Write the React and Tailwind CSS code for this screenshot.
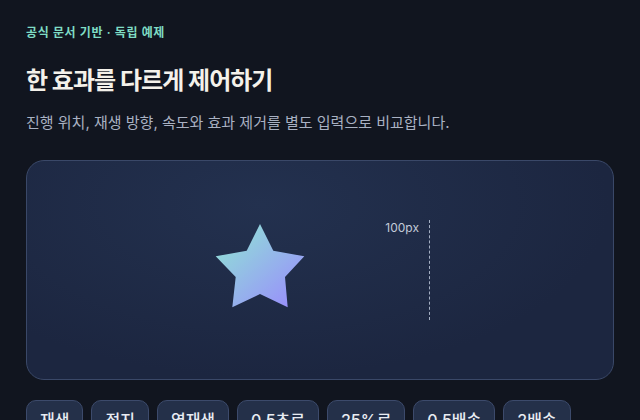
import React from "react";

const buttons = ["재생", "정지", "역재생", "0.5초로", "25%로", "0.5배속", "2배속"];

const Star = () => (
  <svg width="92" height="92" viewBox="0 0 92 92">
    <defs>
      <linearGradient id="starFill" x1="0" y1="0" x2="1" y2="1">
        <stop offset="0%" stopColor="#8fe9d2" />
        <stop offset="100%" stopColor="#9a88ff" />
      </linearGradient>
    </defs>
    <polygon
      points="46,0 59.3,26.7 90.3,32.3 71,53 73.7,83.3 46,70 18.3,83.3 21.7,53 1.7,32.3 32.7,26.7"
      fill="url(#starFill)"
    />
  </svg>
);

const App = () => {
  return (
    <div lang="ko" className="min-h-screen bg-[#11151f] px-[26px] pt-[25px] font-['Inter','Noto_Sans_CJK_KR',sans-serif] overflow-hidden">
      <p className="text-xs font-semibold tracking-wider text-[#7fdcc4]">
        공식 문서 기반 · 독립 예제
      </p>
      <h1 className="mt-[22px] text-[24px] leading-9 font-bold tracking-[-0.04em] text-[#f4f1ea]">
        한 효과를 다르게 제어하기
      </h1>
      <p className="mt-[12px] text-[15px] leading-6 text-[#a9b1c2]">
        진행 위치, 재생 방향, 속도와 효과 제거를 별도 입력으로 비교합니다.
      </p>

      <div className="mt-[25px] h-[220px] rounded-[18px] border border-[#3a4868] bg-[radial-gradient(ellipse_at_40%_20%,#23314f_0%,#1c2640_70%)] flex items-center justify-center">
        <div className="w-[100px] h-[100px] flex items-center justify-center">
          <Star />
        </div>
        <div className="w-[120px] h-[100px] border-r border-dashed border-[#a4afc3] flex justify-end pr-[10px]">
          <span className="text-xs leading-4 text-[#c3cbd9]">100px</span>
        </div>
      </div>

      <div className="mt-[20px] flex gap-2">
        {buttons.map((label) => (
          <button
            key={label}
            className="h-10 px-[13px] rounded-[10px] border border-[#3c4a6b] bg-[#243049] text-base font-medium text-[#e8ebf2]"
          >
            {label}
          </button>
        ))}
      </div>
    </div>
  );
};

export default App;
